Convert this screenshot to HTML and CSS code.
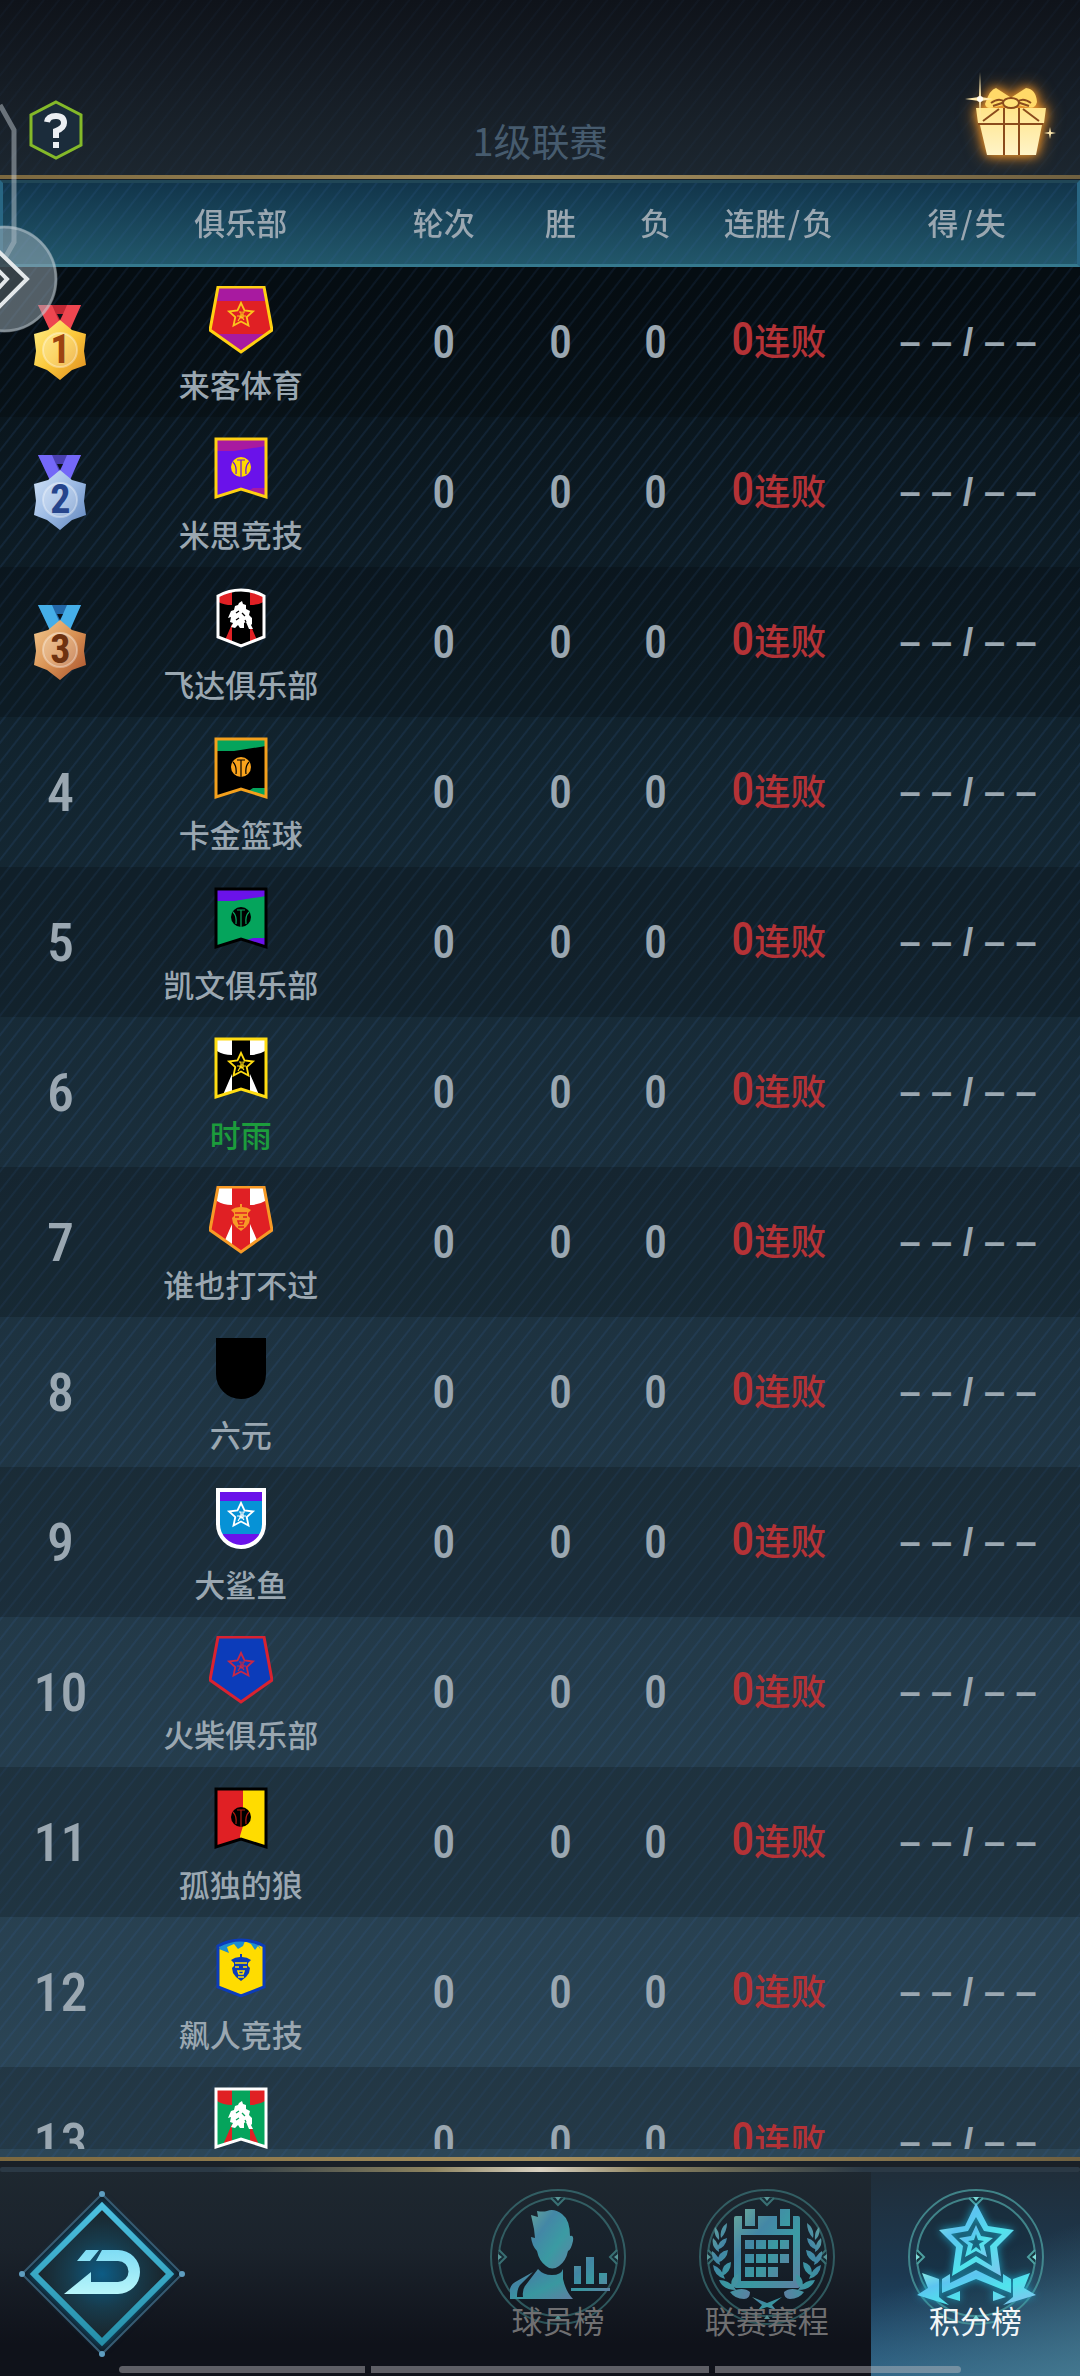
FILE: index.html
```html
<!DOCTYPE html>
<html lang="zh-CN">
<head>
<meta charset="utf-8">
<meta name="viewport" content="width=device-width, initial-scale=1">
<title>1级联赛</title>
<link rel="stylesheet" href="styles.css">
</head>
<body>
<svg class="defs" aria-hidden="true">
  <defs>
    <linearGradient id="gold" x1="0" y1="0" x2="1" y2="1"><stop offset="0" stop-color="#fff08a"/><stop offset=".5" stop-color="#fbc93c"/><stop offset="1" stop-color="#dd8a1e"/></linearGradient>
    <linearGradient id="silver" x1="0" y1="0" x2="1" y2="1"><stop offset="0" stop-color="#d3e4f8"/><stop offset=".5" stop-color="#9dbbe4"/><stop offset="1" stop-color="#5f84bc"/></linearGradient>
    <linearGradient id="bronze" x1="0" y1="0" x2="1" y2="1"><stop offset="0" stop-color="#f3cb92"/><stop offset=".5" stop-color="#d99355"/><stop offset="1" stop-color="#a8502c"/></linearGradient>
    <linearGradient id="aqua" x1="0" y1="0" x2="1" y2="1"><stop offset="0" stop-color="#8ff0e0"/><stop offset=".3" stop-color="#5cc4f0"/><stop offset=".6" stop-color="#4fe4ec"/><stop offset="1" stop-color="#8dbcf0"/></linearGradient>
    <linearGradient id="arrow" x1="0" y1="0" x2="0" y2="1"><stop offset="0" stop-color="#7fdcf4"/><stop offset="1" stop-color="#b8f6fb"/></linearGradient>
    <linearGradient id="rim" x1="0" y1="0" x2="0" y2="1"><stop offset="0" stop-color="#4cc0e0"/><stop offset="1" stop-color="#2690aa"/></linearGradient>
    <radialGradient id="core"><stop offset="0" stop-color="#0d5c85"/><stop offset=".5" stop-color="#173b4c"/><stop offset="1" stop-color="#1a2227"/></radialGradient>
    <linearGradient id="box" x1="0" y1="0" x2="0" y2="1"><stop offset="0" stop-color="#ffe489"/><stop offset="1" stop-color="#fff4c8"/></linearGradient>

    <path id="pent" d="M9 1H55L63 44 32 66 1 44Z"/>
    <path id="flag" d="M7 3H57V61L32 53 7 61Z"/>
    <path id="round" d="M9 4H55V38A23 23 0 0 1 9 38Z"/>
    <path id="crest" d="M9 10Q20 4 32 4T55 10V51L32 60 9 51Z"/>
    <clipPath id="pentClip"><use href="#pent"/></clipPath>
    <clipPath id="flagClip"><use href="#flag"/></clipPath>
    <clipPath id="roundClip"><use href="#round"/></clipPath>
    <clipPath id="crestClip"><use href="#crest"/></clipPath>

    <symbol id="star" viewBox="0 0 64 68"><path d="M32 17 35.500 24.500 44 25.500 37.700 31 39.500 39.500 32 35.500 24.500 39.500 26.300 31 20 25.500 28.500 24.500Z" fill="none" stroke="currentColor" stroke-width="1.800"/><path d="M30 26h2v3h2v-3h2M28 30h3v2h3v-2h3M29 35l3-5 3 4M32 28v4" fill="none" stroke="currentColor" stroke-width="1.200"/></symbol>
    <symbol id="ball" viewBox="0 0 64 68"><circle cx="32" cy="31" r="10" fill="currentColor"/><path d="M32 24v17M28 24h8M24 26q4 4 3 12M40 26q-4 4-3 12" fill="none" stroke="var(--in)" stroke-width="1.200"/></symbol>
    <symbol id="horse" viewBox="0 0 64 68"><path d="M30 17l3-2 1 3 3 1v4l4 2-1 4 3 3v6l-1 1 2 4h-4l-3-7-2 1v5h-4l-2-3-3 3-4-1 2-4-3-1 1-5-3 1 3-7 3-1 1-4 3-1z" fill="currentColor"/><path d="M27 27l3-2M33 27l3 3M27 34l3-2M36 34l1 2" stroke="var(--in)" stroke-width="1.300"/></symbol>
    <symbol id="lion" viewBox="0 0 64 68"><path d="M22 24q4-3 9-3v-3h2v3q5 0 9 3l-3 3v3l2 2-1 5-3 4-5 4-5-4-3-4-1-5 2-2v-3z" fill="currentColor"/><path d="M26 27h12M26 31h4M34 31h4M29 35h6l-1 3h-4z" stroke="var(--in)" stroke-width="1.600" fill="none"/><path d="M29 41h6" stroke="var(--in)" stroke-width="1.500"/></symbol>
    <symbol id="rays" viewBox="0 0 64 68"><path d="M0 0H23V19Q14 19 8 15ZM64 0H41V19Q50 19 56 15ZM10 68 23 38V68ZM54 68 41 38V68Z" fill="currentColor"/></symbol>
    <symbol id="medal" viewBox="-1 0 56 78">
      <path d="M5 2H48L31 36H22Z" fill="var(--shade)"/>
      <path d="M5 2H19L33 34H20ZM48 2H34L20 34H34Z" fill="var(--ribbon)"/>
      <path d="M24 11h6l-3 6z" fill="#0a1218"/>
      <path d="M27 17 39 27 53 31 51 48 53 62 39 67 27 77 14 67 1 62 3 48 1 31 15 27Z" fill="var(--metal)"/>
      <circle cx="27" cy="47" r="17" fill="#fff" opacity=".22"/><circle cx="27" cy="47" r="17" fill="none" stroke="#fff" opacity=".35" stroke-width="2"/>
    </symbol>
    <symbol id="ring" viewBox="0 0 150 150">
      <circle cx="75" cy="75" r="67" fill="none" stroke="#4c9fa0" stroke-width="2" opacity=".75"/>
      <circle cx="75" cy="75" r="59" fill="#0c2430" fill-opacity=".35" stroke="#4c9fa0" stroke-width="2" opacity=".75"/>
      <path d="M68 16 75 23 82 16M16 68 23 75 16 82M134 68 127 75 134 82" fill="#17343f" stroke="#4c9fa0" stroke-width="2"/>
      <path d="M72 15h6l-3 4zM15 72v6l4-3zM135 72v6l-4-3zM72 137h6l-3-4z" fill="#7fdcd8"/>
    </symbol>
    <symbol id="laurel" viewBox="0 0 150 150">
      <path d="M35 41q-8 6-6 15 6-6 6-15zM23 45q-2 8 4 13 1-8-4-13zM35 56q-9 2-10 12 9-3 10-12zM21 56q-2 9 6 14 0-9-6-14zM36 68q-10 1-11 13 10-3 11-13zM20 69q-1 10 8 14-1-10-8-14zM39 80q-10 2-9 14 9-4 9-14zM21 83q1 11 12 14-3-11-12-14zM46 92q-9 4-6 15 8-5 6-15zM27 98q4 10 17 10-6-10-17-10zM38 110q13-6 20 0 0 7-6 7-9 0-14-7z"/>
    </symbol>
  </defs>
</svg>

<div class="app">
  <header class="top">
    <button class="help" type="button" aria-label="帮助">
      <svg viewBox="0 0 56 60"><path d="M28 2 53 15V45L28 58 3 45V15Z" fill="#1b2c3b" stroke="#84b929" stroke-width="3"/><path d="M19 22Q20 16 28 16T36 23Q36 28 28 31V38" fill="none" stroke="#eceff3" stroke-width="6"/><path d="M25 42h6v6h-6z" fill="#eceff3"/></svg>
    </button>
    <h1>1级联赛</h1>
    <button class="gift" type="button" aria-label="礼包">
      <svg viewBox="0 0 100 90">
        <g class="glow"><path d="M15 38H85L83 53H17ZM19 55H81L75 85H26Z" fill="url(#box)"/>
        <path d="M49 27 35 18Q29 19 24 34 25 40 34 37L48 34ZM51 27 65 18Q75 19 76 32 74 40 66 37L52 34Z" fill="#ffd968"/></g>
        <path d="M17 54H82M43 38V85M58 38V85M22 51 38 39M78 51 62 39M30 33Q38 27 44 32L32 36M70 33Q62 27 56 32L68 36" fill="none" stroke="#8a4b1c" stroke-width="2"/>
        <ellipse cx="50" cy="33" rx="8" ry="5" fill="#ffe27a" stroke="#8a4b1c" stroke-width="2"/>
        <path d="M19 2 20 27 32 29 20 31 19 48 18 31 4 29 18 27ZM89 57 90 62 95 63 90 64 89 69 88 64 83 63 88 62Z" fill="#ffe9ae"/>
        <circle cx="19" cy="29" r="3" fill="#fffaf0"/>
      </svg>
    </button>
  </header>
  <div class="goldline"></div>

  <main class="board">
    <div class="scroller">
      <table>
        <colgroup><col class="c-rank"><col class="c-club"><col class="c-round"><col class="c-win"><col class="c-loss"><col class="c-streak"><col class="c-score"></colgroup>
        <thead><tr><th aria-label="排名"></th><th>俱乐部</th><th>轮次</th><th>胜</th><th>负</th><th>连胜<i>/</i>负</th><th class="score-head">得<i>/</i>失</th></tr></thead>
        <tbody>
          <tr><td class="rank"><span class="medal gold"><svg><use href="#medal"/></svg><b>1</b></span></td>
            <td class="club"><svg viewBox="0 0 64 68"><g clip-path="url(#pentClip)"><path fill="#a81aa0" d="M0 0h64v68H0z"/><path fill="#e02024" d="M0 15h64v33H0z"/></g><use href="#pent" fill="none" stroke="#ffd012" stroke-width="3"/><use href="#star" color="#fbc41c"/></svg><span>来客体育</span></td>
            <td class="num">0</td><td class="num">0</td><td class="num">0</td><td class="streak"><b>0</b>连败</td><td class="score">– – / – –</td></tr>
          <tr><td class="rank"><span class="medal silver"><svg><use href="#medal"/></svg><b>2</b></span></td>
            <td class="club"><svg viewBox="0 0 64 68" style="--in:#6a12ea"><g clip-path="url(#flagClip)"><path fill="#a81aa0" d="M0 0h64v68H0z"/><path fill="#6a12ea" d="M0 15H25L64 9V52H44L20 68H0z"/></g><use href="#flag" fill="none" stroke="#ffd012" stroke-width="3"/><use href="#ball" color="#ffd800"/></svg><span>米思竞技</span></td>
            <td class="num">0</td><td class="num">0</td><td class="num">0</td><td class="streak"><b>0</b>连败</td><td class="score">– – / – –</td></tr>
          <tr><td class="rank"><span class="medal bronze"><svg><use href="#medal"/></svg><b>3</b></span></td>
            <td class="club"><svg viewBox="0 0 64 68" style="--in:#000"><g clip-path="url(#crestClip)"><path d="M0 0h64v68H0z"/><use href="#rays" color="#e02024"/></g><use href="#crest" fill="none" stroke="#fff" stroke-width="3"/><use href="#horse" color="#fff"/></svg><span>飞达俱乐部</span></td>
            <td class="num">0</td><td class="num">0</td><td class="num">0</td><td class="streak"><b>0</b>连败</td><td class="score">– – / – –</td></tr>
          <tr><td class="rank">4</td>
            <td class="club"><svg viewBox="0 0 64 68" style="--in:#000"><g clip-path="url(#flagClip)"><path fill="#05a45c" d="M0 0h64v68H0z"/><path d="M0 15H25L64 9V52H44L20 68H0z"/></g><use href="#flag" fill="none" stroke="#f4a01c" stroke-width="3"/><use href="#ball" color="#f9a31c"/></svg><span>卡金篮球</span></td>
            <td class="num">0</td><td class="num">0</td><td class="num">0</td><td class="streak"><b>0</b>连败</td><td class="score">– – / – –</td></tr>
          <tr><td class="rank">5</td>
            <td class="club"><svg viewBox="0 0 64 68" style="--in:#05a45c"><g clip-path="url(#flagClip)"><path fill="#6a12ea" d="M0 0h64v68H0z"/><path fill="#05a45c" d="M0 15H25L64 9V52H44L20 60H0z"/></g><use href="#flag" fill="none" stroke="#000" stroke-width="3"/><use href="#ball" color="#000"/></svg><span>凯文俱乐部</span></td>
            <td class="num">0</td><td class="num">0</td><td class="num">0</td><td class="streak"><b>0</b>连败</td><td class="score">– – / – –</td></tr>
          <tr><td class="rank">6</td>
            <td class="club own"><svg viewBox="0 0 64 68"><g clip-path="url(#flagClip)"><path d="M0 0h64v68H0z"/><use href="#rays" color="#fff"/></g><use href="#flag" fill="none" stroke="#ffdc12" stroke-width="3"/><use href="#star" color="#ffdc12"/></svg><span>时雨</span></td>
            <td class="num">0</td><td class="num">0</td><td class="num">0</td><td class="streak"><b>0</b>连败</td><td class="score">– – / – –</td></tr>
          <tr><td class="rank">7</td>
            <td class="club"><svg viewBox="0 0 64 68" style="--in:#e02024"><g clip-path="url(#pentClip)"><path fill="#e02024" d="M0 0h64v68H0z"/><use href="#rays" color="#fff"/></g><use href="#pent" fill="none" stroke="#f79a26" stroke-width="3"/><use href="#lion" color="#f79a26"/></svg><span>谁也打不过</span></td>
            <td class="num">0</td><td class="num">0</td><td class="num">0</td><td class="streak"><b>0</b>连败</td><td class="score">– – / – –</td></tr>
          <tr><td class="rank">8</td>
            <td class="club"><svg viewBox="0 0 64 68"><use href="#round" stroke="#000" stroke-width="4"/></svg><span>六元</span></td>
            <td class="num">0</td><td class="num">0</td><td class="num">0</td><td class="streak"><b>0</b>连败</td><td class="score">– – / – –</td></tr>
          <tr><td class="rank">9</td>
            <td class="club"><svg viewBox="0 0 64 68"><g clip-path="url(#roundClip)"><path fill="#6a12ea" d="M0 0h64v68H0z"/><path fill="#0692d6" d="M0 15h64v33H0z"/></g><use href="#round" fill="none" stroke="#fff" stroke-width="4"/><use href="#star" color="#fff"/></svg><span>大鲨鱼</span></td>
            <td class="num">0</td><td class="num">0</td><td class="num">0</td><td class="streak"><b>0</b>连败</td><td class="score">– – / – –</td></tr>
          <tr><td class="rank">10</td>
            <td class="club"><svg viewBox="0 0 64 68"><use href="#pent" fill="#0c3cba" stroke="#d92230" stroke-width="3"/><use href="#star" color="#c82846"/></svg><span>火柴俱乐部</span></td>
            <td class="num">0</td><td class="num">0</td><td class="num">0</td><td class="streak"><b>0</b>连败</td><td class="score">– – / – –</td></tr>
          <tr><td class="rank">11</td>
            <td class="club"><svg viewBox="0 0 64 68" style="--in:#b01a10"><g clip-path="url(#flagClip)"><path fill="#ffdc00" d="M0 0h64v68H0z"/><path fill="#e02024" d="M0 0H34V40L31 50V68H0z"/></g><use href="#flag" fill="none" stroke="#000" stroke-width="3"/><use href="#ball" color="#000"/></svg><span>孤独的狼</span></td>
            <td class="num">0</td><td class="num">0</td><td class="num">0</td><td class="streak"><b>0</b>连败</td><td class="score">– – / – –</td></tr>
          <tr><td class="rank">12</td>
            <td class="club"><svg viewBox="0 0 64 68" style="--in:#ffdc00"><g clip-path="url(#crestClip)"><path fill="#ffdc00" d="M0 0h64v68H0z"/><path fill="#1c8ed0" d="M10 13 20 17 18 11 25 8 29 13 34 10 36 5 42 8 46 14 49 10 52 14 48 6 32 2 12 8z"/></g><use href="#crest" fill="none" stroke="#0c3cba" stroke-width="3"/><use href="#lion" color="#0c3cba"/></svg><span>飙人竞技</span></td>
            <td class="num">0</td><td class="num">0</td><td class="num">0</td><td class="streak"><b>0</b>连败</td><td class="score">– – / – –</td></tr>
          <tr><td class="rank">13</td>
            <td class="club"><svg viewBox="0 0 64 68" style="--in:#05a45c"><g clip-path="url(#flagClip)"><path fill="#05a45c" d="M0 0h64v68H0z"/><use href="#rays" color="#e02024"/></g><use href="#flag" fill="none" stroke="#fff" stroke-width="3"/><use href="#horse" color="#fff"/></svg></td>
            <td class="num">0</td><td class="num">0</td><td class="num">0</td><td class="streak"><b>0</b>连败</td><td class="score">– – / – –</td></tr>
        </tbody>
      </table>
    </div>
  </main>
  <div class="goldline"></div>

  <footer class="bottom">
    <div class="shine"></div>
    <nav>
      <button class="back" type="button" aria-label="返回">
        <svg viewBox="0 0 170 170">
          <path d="M85 5 165 85 85 165 5 85Z" fill="#101c26" stroke="#3a5a70" stroke-width="2"/>
          <g class="blue-glow"><path d="M85 17 153 85 85 153 17 85Z" fill="url(#core)" stroke="url(#rim)" stroke-width="6"/>
          <path d="M85 61H101A22 22 0 0 1 101 105H47L74 83V93H101A10 10 0 0 0 101 72H79ZM69 61H82L73 72H60Z" fill="url(#arrow)"/></g>
          <g fill="#5f9ec0"><circle cx="85" cy="5" r="3"/><circle cx="165" cy="85" r="3"/><circle cx="85" cy="165" r="3"/><circle cx="5" cy="85" r="3"/></g>
        </svg>
      </button>
      <div class="tabs">
        <a class="tab" href="#players">
          <svg viewBox="0 0 150 150"><use href="#ring"/><g fill="url(#aqua)">
            <path d="M48 33 55 35 54 29Q60 30 64 29 71 26 79 32 87 38 87 54 91 53 90 59 88 68 85 69 83 79 76 84 69 89 63 84 56 79 54 69 49 64 48 55L52 56 51 47Z"/>
            <path d="M27 117V107Q28 102 34 99L50 90 37 103Q34 107 34 115L40 115Q39 108 42 104L55 87Q60 93 69 93T80 87V97Q83 110 90 117Z"/>
            <path d="M91 84h7v18h-7zM103 75h8v27h-8zM116 91h8v11h-8zM88 106h39v3H88z"/></g></svg>
          <span>球员榜</span>
        </a>
        <a class="tab" href="#schedule">
          <svg viewBox="0 0 150 150"><use href="#ring"/><g fill="url(#aqua)">
            <path fill-rule="evenodd" d="M44 34H50V47H66V34H85V47H101V34H106Q108 34 108 36V104Q108 106 106 106H44Q42 106 42 104V36Q42 34 44 34ZM49 53V99H101V53Z"/>
            <path d="M53 27h10v17H53zM88 27h10v17H88zM53 58h9v9h-9zM64 58h10v9H64zM76 58h10v9H76zM88 58h9v9h-9zM53 72h9v9h-9zM64 72h10v9H64zM76 72h10v9H76zM88 72h9v9h-9zM53 85h9v10h-9zM64 85h10v10H64zM76 85h10v10H76z"/>
            <use href="#laurel"/><use href="#laurel" transform="matrix(-1 0 0 1 150 0)"/>
            <path d="M60 115 75 121 90 115 80 123 84 128 75 125 66 128 70 123Z"/></g></svg>
          <span>联赛赛程</span>
        </a>
        <a class="tab active" href="#standings" aria-current="page">
          <svg viewBox="0 0 150 150"><use href="#ring"/><g class="cyan-glow" fill="url(#aqua)">
            <path fill-rule="evenodd" d="M75 21 87 44 113 48 96 65 100 94 75 80 51 94 55 65 38 48 64 44ZM75 35 67 49 50 52 62 64 59 84 75 74 91 84 89 64 101 52 83 49Z"/>
            <path fill-rule="evenodd" d="M75 43 80 54 92 56 83 63 86 75 75 69 64 75 67 63 58 56 70 54ZM75 52 73 58 67 59 72 62 70 69 75 65 80 69 78 62 83 59 77 58Z"/>
            <path d="M75 88 102 101V92L110 97V111L75 97 41 111V97L49 92V101ZM21 91 38 97V115L48 123 16 113 27 106ZM129 91 112 97V115L102 123 135 113 123 106ZM45 115 59 109V119ZM105 115 92 109V119Z"/></g></svg>
          <span>积分榜</span>
        </a>
      </div>
    </nav>
    <div class="homebar"><i></i><i></i><i></i></div>
  </footer>

  <svg class="edge" viewBox="0 0 64 240" aria-hidden="true">
    <path d="M0 5 14 30V142L5 158" fill="none" stroke="#cfd6de" stroke-opacity=".45" stroke-width="5"/>
    <circle cx="4" cy="179" r="53" fill="#9fb0ba" fill-opacity=".5"/>
    <circle cx="4" cy="179" r="52" fill="none" stroke="#dfe8ee" stroke-opacity=".35" stroke-width="3"/>
    <path d="M0 154 27 179 0 205Z" fill="#2b343b" fill-opacity=".7"/>
    <path d="M-4 149 27 179-4 210M-4 168 7 179-4 191" fill="none" stroke="#e4e8ea" stroke-width="4"/>
  </svg>
</div>
</body>
</html>
```
FILE: styles.css
```css
* { box-sizing: border-box; }

:root {
  --stripes: repeating-linear-gradient(128deg, rgba(52, 96, 156, 0) 0 9px, rgba(52, 96, 156, .17) 10px 11px, rgba(52, 96, 156, 0) 12px);
  --text: #9aa7b1;
}

body {
  margin: 0;
  background: #0f131a;
  color: var(--text);
  font-family: "Noto Sans CJK SC", "Noto Sans", sans-serif;
}

button {
  padding: 0;
  border: 0;
  background: none;
  cursor: pointer;
}

svg { display: block; }
i { font-style: normal; }

.defs {
  position: absolute;
  width: 0;
  height: 0;
}

.app {
  position: relative;
  display: flex;
  flex-direction: column;
  height: 100vh;
  overflow: hidden;
}

.top {
  display: grid;
  grid-template-columns: 1fr auto 1fr;
  align-items: end;
  padding: 70px 19px 15px;
  background: repeating-linear-gradient(128deg, rgba(52, 96, 156, 0) 0 9px, rgba(52, 96, 156, .06) 10px 11px, rgba(52, 96, 156, 0) 12px), linear-gradient(#0f131a, #1c262f);
}

.top h1 {
  margin: 0;
  color: #465b6e;
  font-size: 38px;
  font-weight: 400;
  line-height: 40px;
}

.help {
  justify-self: start;
  margin-left: 9px;
}

.help svg { width: 56px; height: 60px; }
.gift { justify-self: end; }
.gift svg { width: 100px; height: 90px; overflow: visible; }
.glow { filter: drop-shadow(0 0 5px #f09a30) drop-shadow(0 0 8px #b8701f); }
.blue-glow { filter: drop-shadow(0 0 4px #11658c); }
.cyan-glow { filter: drop-shadow(0 0 4px #1b9fc0); }

.goldline {
  flex: none;
  height: 5px;
  border-bottom: 1px solid #16202a;
  background: linear-gradient(90deg, #7b683f, #a58f5e 50%, #6f6040);
}

.board {
  flex: 1;
  min-height: 0;
  padding-bottom: 8px;
  background: var(--stripes), linear-gradient(#02070b 0, #071016 90px, #12242f 30%, #1e3341 60%, #2c4657);
}

.scroller {
  height: 100%;
  overflow-y: auto;
  scrollbar-width: none;
}

table {
  width: 100%;
  table-layout: fixed;
  border-collapse: separate;
  border-spacing: 0;
}

.c-rank { width: 11.2%; }
.c-club { width: 22.2%; }
.c-round { width: 15.4%; }
.c-win { width: 6.2%; }
.c-loss { width: 11.4%; }
.c-streak { width: 11.4%; }
.c-score { width: 22.2%; }

th, td {
  padding: 0;
  text-align: center;
}

thead tr {
  position: sticky;
  top: 0;
  z-index: 1;
  background: var(--stripes), linear-gradient(#11344a, #22586b);
}

th {
  height: 87px;
  padding-bottom: 4px;
  border-top: 3px solid #204656;
  border-bottom: 3px solid #35798e;
  font-size: 31px;
  font-weight: 500;
  white-space: nowrap;
}

th i { margin: 0 2px; }
th:first-child { border-left: 3px solid #286683; }
th:last-child { border-right: 3px solid #286683; }
.score-head, .score { padding-left: 16px; }

tbody tr { height: 150px; }
tbody tr:nth-child(odd) { background: rgba(0, 0, 0, .18); }

.rank, .num, .streak b {
  font-family: "Roboto Condensed", "Liberation Sans Narrow", "Open Sans Condensed", "Roboto", sans-serif;
  font-weight: 500;
}

.rank { font-size: 54px; }
.num { font-size: 46px; }

.medal {
  display: grid;
  justify-content: center;
  justify-items: center;
}

.medal svg { width: 56px; height: 78px; }
.medal > * { grid-area: 1 / 1; }
.medal b {
  margin-top: 24px;
  font-size: 40px;
  line-height: 46px;
}

.gold { --metal: url(#gold); --ribbon: #ee4650; --shade: #c02834; color: #9c4410; }
.silver { --metal: url(#silver); --ribbon: #7468f8; --shade: #4a40b0; color: #26458c; }
.bronze { --metal: url(#bronze); --ribbon: #45aee8; --shade: #2468a8; color: #6e3210; }

.club {
  padding: 19px 0 13px;
  font-size: 31px;
  font-weight: 500;
  line-height: 40px;
  vertical-align: top;
  white-space: nowrap;
}

.club svg {
  width: 64px;
  height: 68px;
  margin: 0 auto 10px;
}

.club.own { color: #1c9c3c; }

.streak {
  padding-bottom: 6px;
  color: #b43236;
  font-size: 36px;
  font-weight: 500;
  white-space: nowrap;
}

.streak b { font-size: 46px; }

.score {
  font-family: "Liberation Sans", sans-serif;
  font-size: 38px;
  font-weight: 700;
  white-space: nowrap;
}

.bottom {
  position: relative;
  padding-top: 5px;
  background: linear-gradient(#1a2027 0 5px, #1e2830 6px, #1b232c 40%, #0f121a 85%);
}

.shine {
  height: 5px;
  border-radius: 3px;
  background: linear-gradient(90deg, #2b3945 20%, #8d835f 40%, #d8d0c0 50%, #8d835f 60%, #2b3945 80%);
}

nav {
  display: flex;
  justify-content: space-between;
}

.back { margin: 17px 0 17px 17px; }
.back svg { width: 170px; height: 170px; }

.tabs {
  display: grid;
  grid-template-columns: repeat(3, 1fr);
  width: 58%;
}

.tab {
  display: flex;
  flex-direction: column;
  align-items: center;
  padding-top: 10px;
  color: #6f6f71;
  font-size: 31px;
  line-height: 40px;
  text-decoration: none;
}

.tab svg { width: 150px; height: 150px; opacity: .62; }
.tab span { position: relative; margin-top: -32px; }

.tab.active {
  background:
    linear-gradient(160deg, rgba(30, 44, 58, 0) 45%, rgba(82, 134, 150, .7)),
    linear-gradient(#202e3a, #1c3850 50%, #22567f);
  color: #f2f5f7;
}

.tab.active svg { opacity: 1; }

.homebar {
  position: absolute;
  left: 11%;
  right: 11%;
  bottom: 3px;
  display: grid;
  grid-template-columns: 245fr 338fr 245fr;
  gap: 6px;
  height: 7px;
  overflow: hidden;
  border-radius: 4px;
}

.homebar i { background: rgba(190, 190, 195, .45); }

.edge {
  position: absolute;
  top: 100px;
  left: 0;
  z-index: 2;
  width: 64px;
  height: 240px;
}
```
